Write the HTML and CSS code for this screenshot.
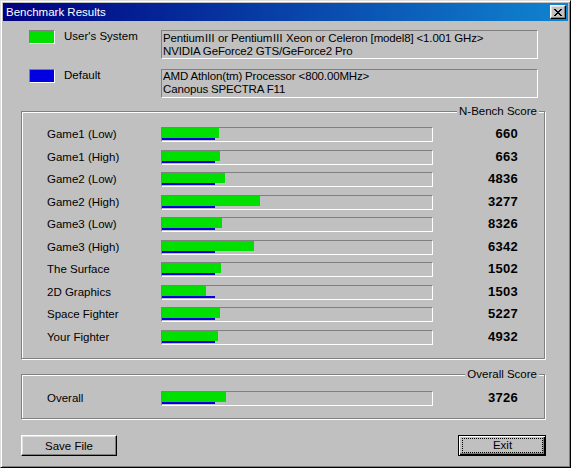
FILE: index.html
```html
<!DOCTYPE html>
<html lang="en">
<head>
<meta charset="utf-8">
<title>Benchmark Results</title>
<link rel="stylesheet" href="styles.css">
</head>
<body>
<div class="window">
  <div class="titlebar">
    <span class="title">Benchmark Results</span>
    <button class="close" aria-label="Close">
      <svg width="8" height="7" viewBox="0 0 8 7" shape-rendering="crispEdges"><path fill="#000" d="M0 0h2v1H0zM6 0h2v1H6zM1 1h2v1H1zM5 1h2v1H5zM2 2h4v1H2zM3 3h2v1H3zM2 4h4v1H2zM1 5h2v1H1zM5 5h2v1H5zM0 6h2v1H0zM6 6h2v1H6z"/></svg>
    </button>
  </div>
  <div class="content">
    <div class="systems">
      <div class="sys">
        <span class="swatch swatch-user"></span>
        <span class="sys-label">User's System</span>
        <div class="info">Pentium<span class="roman">Ⅲ</span> or Pentium<span class="roman">Ⅲ</span> Xeon or Celeron [model8] &lt;1.001 GHz&gt;<br>NVIDIA GeForce2 GTS/GeForce2 Pro</div>
      </div>
      <div class="sys">
        <span class="swatch swatch-default"></span>
        <span class="sys-label">Default</span>
        <div class="info">AMD Athlon(tm) Processor &lt;800.00MHz&gt;<br>Canopus SPECTRA F11</div>
      </div>
    </div>

    <div class="group group-scores">
      <span class="legend">N-Bench Score</span>
      <div class="rows">
        <div class="row"><span class="label">Game1 (Low)</span><div class="track"><div class="bar-user" style="width:57px"></div><div class="bar-default" style="width:53px"></div></div><span class="score">660</span></div>
        <div class="row"><span class="label">Game1 (High)</span><div class="track"><div class="bar-user" style="width:58px"></div><div class="bar-default" style="width:53px"></div></div><span class="score">663</span></div>
        <div class="row"><span class="label">Game2 (Low)</span><div class="track"><div class="bar-user" style="width:63px"></div><div class="bar-default" style="width:53px"></div></div><span class="score">4836</span></div>
        <div class="row"><span class="label">Game2 (High)</span><div class="track"><div class="bar-user" style="width:98px"></div><div class="bar-default" style="width:53px"></div></div><span class="score">3277</span></div>
        <div class="row"><span class="label">Game3 (Low)</span><div class="track"><div class="bar-user" style="width:60px"></div><div class="bar-default" style="width:53px"></div></div><span class="score">8326</span></div>
        <div class="row"><span class="label">Game3 (High)</span><div class="track"><div class="bar-user" style="width:92px"></div><div class="bar-default" style="width:53px"></div></div><span class="score">6342</span></div>
        <div class="row"><span class="label">The Surface</span><div class="track"><div class="bar-user" style="width:59px"></div><div class="bar-default" style="width:53px"></div></div><span class="score">1502</span></div>
        <div class="row"><span class="label">2D Graphics</span><div class="track"><div class="bar-user" style="width:44px"></div><div class="bar-default" style="width:53px"></div></div><span class="score">1503</span></div>
        <div class="row"><span class="label">Space Fighter</span><div class="track"><div class="bar-user" style="width:58px"></div><div class="bar-default" style="width:53px"></div></div><span class="score">5227</span></div>
        <div class="row"><span class="label">Your Fighter</span><div class="track"><div class="bar-user" style="width:56px"></div><div class="bar-default" style="width:53px"></div></div><span class="score">4932</span></div>
      </div>
    </div>

    <div class="group group-overall">
      <span class="legend">Overall Score</span>
      <div class="rows">
        <div class="row"><span class="label">Overall</span><div class="track"><div class="bar-user" style="width:64px"></div><div class="bar-default" style="width:53px"></div></div><span class="score">3726</span></div>
      </div>
    </div>

    <div class="buttons">
      <button class="btn btn-save">Save File</button>
      <button class="btn btn-default"><span class="focus">Exit</span></button>
    </div>
  </div>
</div>
</body>
</html>
```
FILE: styles.css
```css
* { box-sizing: border-box; }

html, body {
  margin: 0;
  padding: 0;
  background: #c0c0c0;
}

body {
  font-family: "Liberation Sans", "Noto Sans CJK JP", sans-serif;
  font-size: 11.5px;
  color: #000;
  overflow: hidden;
}

.window {
  width: 571px;
  height: 468px;
  background: #c0c0c0;
  border: 1px solid;
  border-color: #dfdfdf #000 #000 #dfdfdf;
  box-shadow: inset 1px 1px #fff, inset -1px -1px #808080;
  padding: 2px;
}

.titlebar {
  height: 18px;
  display: flex;
  align-items: flex-start;
  justify-content: space-between;
  background: linear-gradient(to right, #000080, #1084d0);
  color: #fff;
  padding-left: 3px;
}

.title {
  line-height: 18px;
  font-size: 11.5px;
}

.close {
  width: 16px;
  height: 14px;
  margin: 2px 2px 0 0;
  padding: 0;
  background: #c0c0c0;
  border: 1px solid;
  border-color: #fff #000 #000 #fff;
  box-shadow: inset -1px -1px #808080, inset 1px 1px #dfdfdf;
  display: flex;
  align-items: center;
  justify-content: center;
}

.close svg { display: block; }

.content {
  padding: 9px 0 0 18px;
}

.systems {
  margin-left: 8px;
  display: flex;
  flex-direction: column;
  gap: 10px;
}

.sys {
  display: grid;
  grid-template-columns: 35px 97px 377px;
  height: 29px;
  align-items: start;
}

.swatch {
  display: block;
  width: 26px;
  height: 14px;
  border: 1px solid;
  border-color: #808080 #fff #fff #808080;
}

.swatch-user { background: #00e000; }
.swatch-default { background: #0000e0; }

.sys-label {
  line-height: 14px;
  margin-top: -1px;
}

.info {
  height: 29px;
  border: 1px solid;
  border-color: #808080 #fff #fff #808080;
  padding: 0 1px;
  line-height: 13px;
  letter-spacing: -0.15px;
  white-space: nowrap;
  overflow: hidden;
}

.roman {
  font-family: "Noto Sans CJK JP", sans-serif;
  font-size: 11px;
  line-height: 13px;
}

.group {
  position: relative;
  width: 524px;
  border: 1px solid #808080;
  box-shadow: inset 1px 1px #fff, 1px 1px 0 #fff;
  padding-left: 25px;
}

.group-scores {
  margin-top: 13px;
  height: 248px;
  padding-top: 15px;
}

.group-overall {
  margin-top: 15px;
  height: 45px;
  padding-top: 16px;
}

.legend {
  position: absolute;
  top: -8px;
  right: 5px;
  background: #c0c0c0;
  padding: 0 2px;
  line-height: 14px;
}

.row {
  display: grid;
  grid-template-columns: 114px 272px 85px;
  align-items: start;
  height: 23px;
}

.row:nth-child(even) { height: 22px; }

.label {
  line-height: 14px;
  white-space: nowrap;
}

.track {
  width: 272px;
  height: 15px;
  border: 1px solid;
  border-color: #808080 #fff #fff #808080;
}

.bar-user {
  height: 10px;
  background: #00e000;
}

.bar-default {
  height: 2px;
  background: #0000e0;
}

.score {
  text-align: right;
  font-weight: bold;
  font-size: 13px;
  line-height: 14px;
  letter-spacing: 0.3px;
}

.buttons {
  margin-top: 16px;
  width: 525px;
  display: flex;
  justify-content: space-between;
}

.btn {
  height: 21px;
  padding: 0;
  background: #c0c0c0;
  font-family: inherit;
  font-size: 11.5px;
  color: #000;
}

.btn-save {
  width: 96px;
  border: 1px solid;
  border-color: #fff #000 #000 #fff;
  box-shadow: inset -1px -1px #808080, inset 1px 1px #dfdfdf;
}

.btn-default {
  width: 88px;
  border: 1px solid #000;
  box-shadow: inset 1px 1px #fff, inset -1px -1px #000, inset -2px -2px #808080;
  padding: 2px 2px 2px 3px;
  display: flex;
}

.focus {
  flex: 1;
  border: 1px dotted #000;
  display: flex;
  align-items: center;
  justify-content: center;
  line-height: 13px;
}
```
